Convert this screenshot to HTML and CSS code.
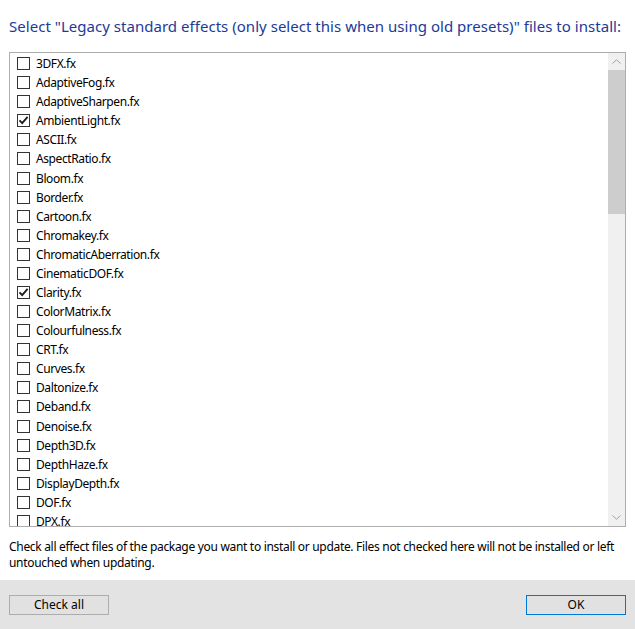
FILE: index.html
```html
<!DOCTYPE html>
<html>
<head>
<meta charset="utf-8">
<link rel="stylesheet" href="styles.css">
</head>
<body>
<div class="dialog">
  <div class="title">Select "Legacy standard effects (only select this when using old presets)" files to install:</div>
  <div class="listbox">
    <div class="items">
      <div class="row"><span class="cb"></span><span class="lbl">3DFX.fx</span></div>
      <div class="row"><span class="cb"></span><span class="lbl">AdaptiveFog.fx</span></div>
      <div class="row"><span class="cb"></span><span class="lbl">AdaptiveSharpen.fx</span></div>
      <div class="row"><span class="cb checked"><svg viewBox="0 0 11 11" width="11" height="11"><path d="M1.5 5.3 L4.2 8.2 L9.6 1.8" fill="none" stroke="#1a1a1a" stroke-width="1.8"/></svg></span><span class="lbl">AmbientLight.fx</span></div>
      <div class="row"><span class="cb"></span><span class="lbl">ASCII.fx</span></div>
      <div class="row"><span class="cb"></span><span class="lbl">AspectRatio.fx</span></div>
      <div class="row"><span class="cb"></span><span class="lbl">Bloom.fx</span></div>
      <div class="row"><span class="cb"></span><span class="lbl">Border.fx</span></div>
      <div class="row"><span class="cb"></span><span class="lbl">Cartoon.fx</span></div>
      <div class="row"><span class="cb"></span><span class="lbl">Chromakey.fx</span></div>
      <div class="row"><span class="cb"></span><span class="lbl">ChromaticAberration.fx</span></div>
      <div class="row"><span class="cb"></span><span class="lbl">CinematicDOF.fx</span></div>
      <div class="row"><span class="cb checked"><svg viewBox="0 0 11 11" width="11" height="11"><path d="M1.5 5.3 L4.2 8.2 L9.6 1.8" fill="none" stroke="#1a1a1a" stroke-width="1.8"/></svg></span><span class="lbl">Clarity.fx</span></div>
      <div class="row"><span class="cb"></span><span class="lbl">ColorMatrix.fx</span></div>
      <div class="row"><span class="cb"></span><span class="lbl">Colourfulness.fx</span></div>
      <div class="row"><span class="cb"></span><span class="lbl">CRT.fx</span></div>
      <div class="row"><span class="cb"></span><span class="lbl">Curves.fx</span></div>
      <div class="row"><span class="cb"></span><span class="lbl">Daltonize.fx</span></div>
      <div class="row"><span class="cb"></span><span class="lbl">Deband.fx</span></div>
      <div class="row"><span class="cb"></span><span class="lbl">Denoise.fx</span></div>
      <div class="row"><span class="cb"></span><span class="lbl">Depth3D.fx</span></div>
      <div class="row"><span class="cb"></span><span class="lbl">DepthHaze.fx</span></div>
      <div class="row"><span class="cb"></span><span class="lbl">DisplayDepth.fx</span></div>
      <div class="row"><span class="cb"></span><span class="lbl">DOF.fx</span></div>
      <div class="row"><span class="cb"></span><span class="lbl">DPX.fx</span></div>
    </div>
    <div class="scrollbar">
      <div class="arrow"><svg viewBox="0 0 9 5" width="9" height="5"><path d="M0.5 4.5 L4.5 0.8 L8.5 4.5" fill="none" stroke="#a3a3a3" stroke-width="1"/></svg></div>
      <div class="track"><div class="thumb"></div></div>
      <div class="arrow"><svg viewBox="0 0 9 5" width="9" height="5"><path d="M0.5 0.5 L4.5 4.2 L8.5 0.5" fill="none" stroke="#a3a3a3" stroke-width="1"/></svg></div>
    </div>
  </div>
  <div class="note"><div class="line">Check all effect files of the package you want to install or update. Files not checked here will not be installed or left</div><div class="line">untouched when updating.</div></div>
  <div class="band">
    <button class="btn">Check all</button>
    <button class="btn primary">OK</button>
  </div>
</div>
</body>
</html>
```
FILE: styles.css
```css
html, body {
  margin: 0;
  padding: 0;
  background: #ffffff;
}
.dialog {
  width: 635px;
  height: 629px;
  display: flex;
  flex-direction: column;
  font-family: "Noto Sans", "Open Sans", sans-serif;
  color: #000;
  overflow: hidden;
}
.title {
  padding: 16px 0 0 9px;
  height: 20px;
  line-height: 20px;
  font-size: 15px;
  color: #1c3a97;
  white-space: nowrap;
  letter-spacing: 0.03px;
}
.listbox {
  margin: 16px 0 0 9px;
  width: 615px;
  height: 473px;
  border: 1px solid #adadad;
  display: flex;
  flex: none;
  overflow: hidden;
}
.items {
  flex: 1;
  padding-top: 1px;
  overflow: hidden;
}
.row {
  height: 19.08px;
  display: flex;
  align-items: center;
  padding-left: 7px;
  font-size: 12px;
  letter-spacing: -0.4px;
}
.cb {
  width: 11px;
  height: 11px;
  border: 1px solid #333;
  background: #fff;
  flex: none;
  display: flex;
}
.cb svg {
  display: block;
}
.lbl {
  margin-left: 6px;
  white-space: nowrap;
}
.scrollbar {
  width: 17px;
  background: #f0f0f0;
  display: flex;
  flex-direction: column;
  flex: none;
}
.arrow {
  height: 17px;
  display: flex;
  align-items: center;
  justify-content: center;
  flex: none;
}
.track {
  flex: 1;
}
.thumb {
  height: 144px;
  background: #cdcdcd;
}
.note {
  margin: 12px 0 0 9px;
  font-size: 12px;
  line-height: 16px;
  height: 32px;
  color: #000;
  letter-spacing: -0.31px;
}
.line {
  white-space: nowrap;
  height: 16px;
}
.band {
  margin-top: 9px;
  flex: 1;
  background: #e3e3e3;
  display: flex;
  justify-content: space-between;
  align-items: flex-start;
  padding: 15px 9px 0 9px;
}
.btn {
  width: 100px;
  height: 20px;
  padding: 0;
  border: 1px solid #adadad;
  background: #e1e1e1;
  font-family: "Noto Sans", "Open Sans", sans-serif;
  font-size: 12px;
  line-height: 18px;
  color: #000;
}
.btn.primary {
  border-color: #0078d7;
}
```
